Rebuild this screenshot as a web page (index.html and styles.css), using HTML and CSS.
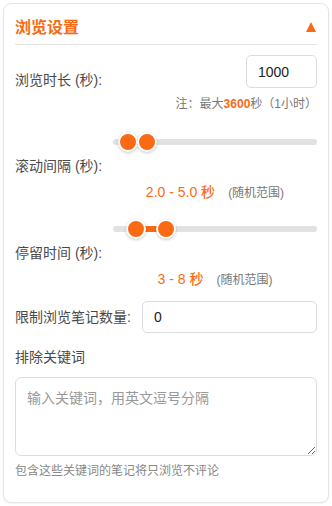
FILE: index.html
```html
<!DOCTYPE html>
<html lang="zh-CN">
<head>
<meta charset="utf-8">
<link rel="stylesheet" href="styles.css">
</head>
<body>
<div class="card">
  <div class="header">
    <span class="title">浏览设置</span>
    <svg class="toggle" width="10" height="10" viewBox="0 0 10 10"><polygon points="5,0 10,10 0,10" fill="#fa6a15"/></svg>
  </div>

  <div class="row row-duration">
    <label class="label label-duration">浏览时长 (秒):</label>
    <div class="duration-col">
      <input class="input input-small" type="text" value="1000">
      <div class="note">注：最大<b>3600</b>秒（1小时）</div>
    </div>
  </div>

  <div class="row row-slider first-slider">
    <label class="label">滚动间隔 (秒):</label>
    <div class="slider-col">
      <div class="slider">
        <div class="track"></div>
        <div class="fill" style="left:15px;width:19px"></div>
        <div class="thumb" style="left:5px"></div>
        <div class="thumb" style="left:24px"></div>
      </div>
      <div class="value"><span class="value-main">2.0 - 5.0 秒</span><span class="value-sub">(随机范围)</span></div>
    </div>
  </div>

  <div class="row row-slider second-slider">
    <label class="label">停留时间 (秒):</label>
    <div class="slider-col">
      <div class="slider">
        <div class="track"></div>
        <div class="fill" style="left:23px;width:30px"></div>
        <div class="thumb" style="left:13px"></div>
        <div class="thumb" style="left:43px"></div>
      </div>
      <div class="value"><span class="value-main">3 - 8 秒</span><span class="value-sub">(随机范围)</span></div>
    </div>
  </div>

  <div class="row row-limit">
    <label class="label label-limit">限制浏览笔记数量:</label>
    <input class="input input-wide" type="text" value="0">
  </div>

  <div class="label block-label">排除关键词</div>
  <textarea class="textarea" placeholder="输入关键词，用英文逗号分隔"></textarea>
  <div class="hint">包含这些关键词的笔记将只浏览不评论</div>
</div>
</body>
</html>
```

FILE: styles.css
```css
* { box-sizing: border-box; }
html, body {
  margin: 0;
  padding: 0;
  background: #ffffff;
}
body {
  padding: 3px;
  font-family: "Liberation Sans", "Noto Sans CJK SC", sans-serif;
  color: #4a4a4a;
}
.card {
  height: 500px;
  border: 1px solid #e4e4e4;
  border-radius: 8px;
  padding: 0 11px;
  background: #fff;
  box-shadow: 0 1px 2px rgba(0,0,0,0.05);
}
.header {
  display: flex;
  justify-content: space-between;
  align-items: center;
  padding: 12px 0 4px;
  border-bottom: 1px solid #e2e2e2;
}
.title {
  font-size: 16px;
  line-height: 24px;
  font-weight: 700;
  color: #fa6a15;
}
.toggle {
  display: block;
  margin-right: 1px;
  margin-top: -2px;
}
.row {
  display: flex;
}
.label {
  font-size: 14px;
  line-height: 20px;
  color: #4a4a4a;
  white-space: nowrap;
}
.row-duration {
  margin-top: 10px;
  justify-content: space-between;
  align-items: flex-start;
}
.label-duration {
  margin-top: 15px;
}
.duration-col {
  display: flex;
  flex-direction: column;
  align-items: flex-end;
}
.input {
  height: 33px;
  border: 1px solid #dcdcdc;
  border-radius: 5px;
  padding: 0 11px;
  font-family: "Liberation Sans", "Noto Sans CJK SC", sans-serif;
  font-size: 14px;
  color: #222;
  outline: none;
  background: #fff;
}
.input-small {
  width: 71px;
}
.note {
  margin-top: 8px;
  font-size: 12px;
  line-height: 16px;
  color: #777;
}
.note b {
  color: #fa6a15;
  font-weight: 700;
}
.row-slider {
  align-items: center;
  justify-content: space-between;
}
.first-slider { margin-top: 20px; }
.second-slider { margin-top: 19px; }
.slider-col {
  flex: 0 0 204px;
  display: flex;
  flex-direction: column;
}
.slider {
  position: relative;
  height: 20px;
}
.track {
  position: absolute;
  left: 0;
  right: 0;
  top: 7px;
  height: 6px;
  border-radius: 3px;
  background: #e2e2e2;
}
.fill {
  position: absolute;
  top: 7px;
  height: 6px;
  background: #fa6a15;
}
.thumb {
  position: absolute;
  top: 0;
  width: 20px;
  height: 20px;
  border-radius: 50%;
  background: #fa6a15;
  border: 2px solid #fff;
  box-shadow: 0 1px 3px rgba(0,0,0,0.22);
}
.value {
  margin-top: 30px;
  height: 18px;
  display: flex;
  justify-content: center;
  align-items: center;
}
.value-main {
  font-size: 14px;
  font-weight: 500;
  color: #fa6a15;
}
.value-sub {
  margin-left: 13px;
  font-size: 12px;
  color: #777;
}
.row-limit {
  margin-top: 14px;
  align-items: center;
  gap: 11px;
}
.label-limit {
  flex: 0 0 auto;
}
.input-wide {
  flex: 1 1 auto;
  min-width: 0;
  width: 100px;
  height: 32px;
}
.block-label {
  margin-top: 14px;
}
.textarea {
  display: block;
  margin-top: 10px;
  width: 100%;
  height: 79px;
  border: 1px solid #dcdcdc;
  border-radius: 6px;
  padding: 10px 11px;
  font-family: "Liberation Sans", "Noto Sans CJK SC", sans-serif;
  font-size: 14px;
  line-height: 20px;
  color: #222;
  outline: none;
  resize: vertical;
}
.textarea::placeholder {
  color: #999;
}
.hint {
  margin-top: 7px;
  font-size: 12px;
  line-height: 16px;
  color: #888;
}
```
